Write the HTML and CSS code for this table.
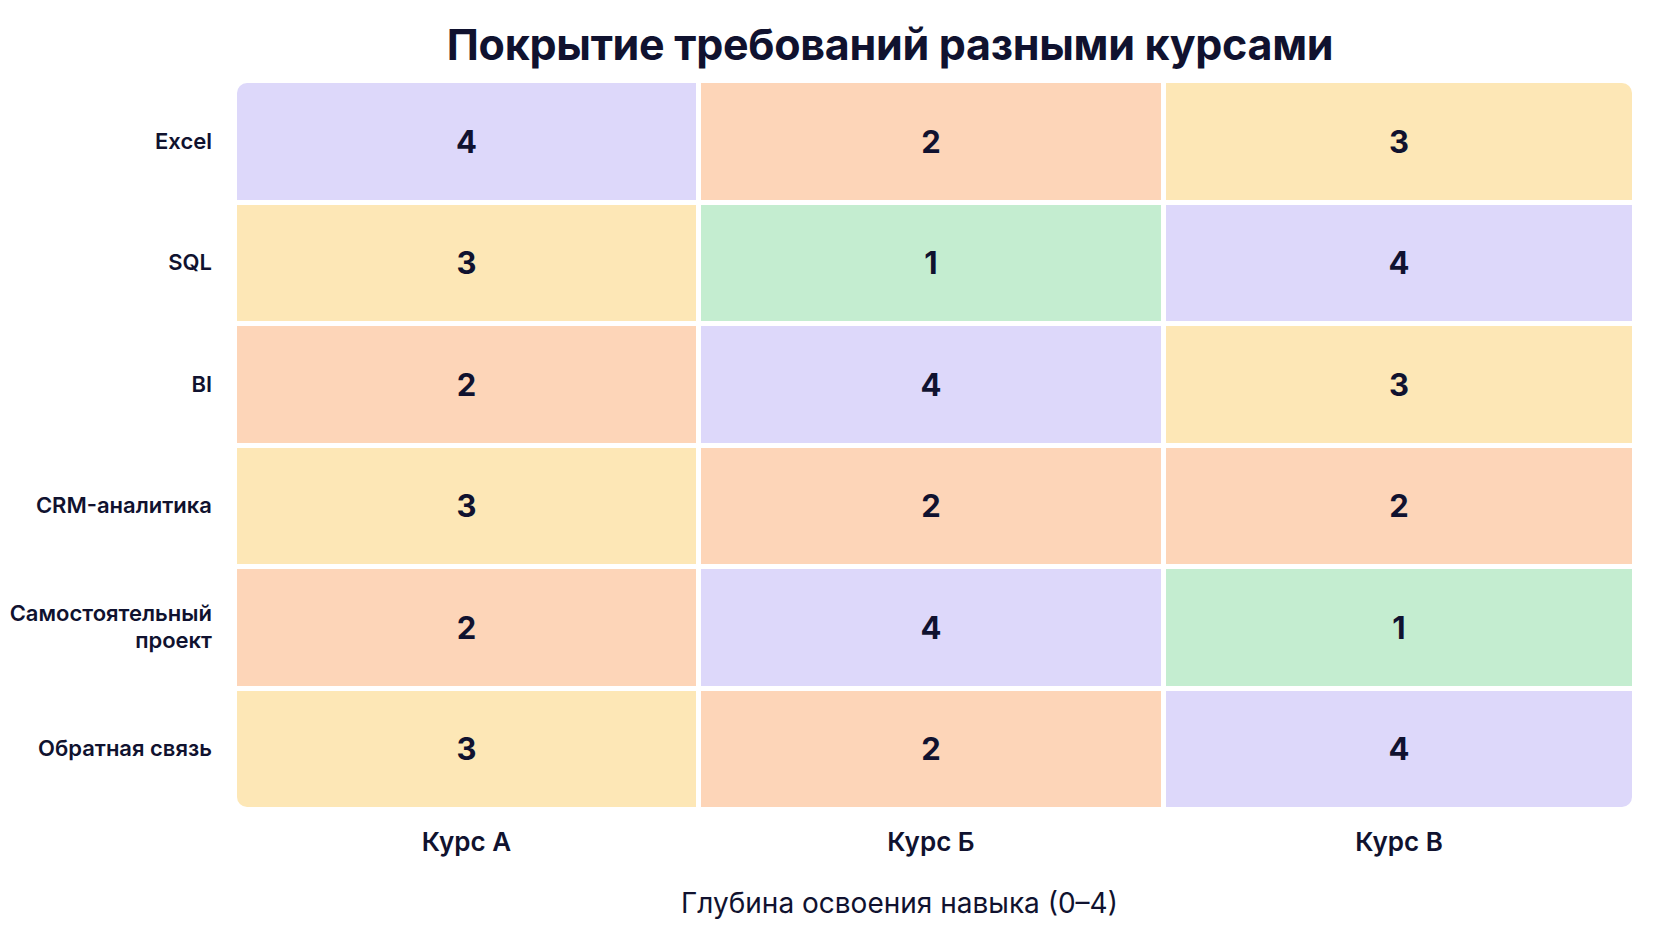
FILE: index.html
```html
<!DOCTYPE html>
<html lang="ru">
<head>
<meta charset="utf-8">
<title>Покрытие требований разными курсами</title>
<link rel="stylesheet" href="styles.css">
</head>
<body>
<main class="chart">
  <h1 class="title">Покрытие требований разными курсами</h1>
  <div class="grid">
    <div class="label">Excel</div>
    <div class="cell c4 tl">4</div>
    <div class="cell c2">2</div>
    <div class="cell c3 tr">3</div>

    <div class="label">SQL</div>
    <div class="cell c3">3</div>
    <div class="cell c1">1</div>
    <div class="cell c4">4</div>

    <div class="label">BI</div>
    <div class="cell c2">2</div>
    <div class="cell c4">4</div>
    <div class="cell c3">3</div>

    <div class="label">CRM-аналитика</div>
    <div class="cell c3">3</div>
    <div class="cell c2">2</div>
    <div class="cell c2">2</div>

    <div class="label">Самостоятельный<br>проект</div>
    <div class="cell c2">2</div>
    <div class="cell c4">4</div>
    <div class="cell c1">1</div>

    <div class="label">Обратная связь</div>
    <div class="cell c3 bl">3</div>
    <div class="cell c2">2</div>
    <div class="cell c4 br">4</div>

    <div class="corner"></div>
    <div class="col-label">Курс А</div>
    <div class="col-label">Курс Б</div>
    <div class="col-label">Курс В</div>
  </div>
  <p class="axis-title">Глубина освоения навыка (0–4)</p>
</main>
</body>
</html>
```
FILE: styles.css
```css
html, body {
  margin: 0;
  padding: 0;
  background: #ffffff;
}
body {
  font-family: Inter, "Noto Sans", "DejaVu Sans", sans-serif;
  color: #10122f;
  width: 1672px;
  height: 941px;
  overflow: hidden;
}
.chart {
  display: flex;
  flex-direction: column;
  width: 1632px;
  padding-top: 18px;
}
.title {
  margin: 0;
  padding-left: 148px;
  font-size: 43px;
  line-height: 52px;
  font-weight: 700;
  text-align: center;
  letter-spacing: -0.3px;
}
.grid {
  margin-top: 13px;
  display: grid;
  grid-template-columns: 232px 459fr 460fr 466fr;
  grid-template-rows: repeat(6, 116.5px) auto;
  gap: 5px;
}
.label {
  display: flex;
  align-items: center;
  justify-content: flex-end;
  text-align: right;
  padding-right: 20px;
  font-size: 22px;
  line-height: 27px;
  font-weight: 600;
}
.cell {
  display: flex;
  align-items: center;
  justify-content: center;
  font-size: 31px;
  font-weight: 700;
}
.c1 { background: #c4edd0; }
.c2 { background: #fdd5b8; }
.c3 { background: #fde7b6; }
.c4 { background: #ddd8fa; }
.tl { border-top-left-radius: 10px; }
.tr { border-top-right-radius: 10px; }
.bl { border-bottom-left-radius: 10px; }
.br { border-bottom-right-radius: 10px; }
.col-label {
  margin-top: 13px;
  text-align: center;
  font-size: 26px;
  line-height: 33px;
  font-weight: 600;
}
.axis-title {
  margin: 28px 0 0;
  padding-left: 237px;
  padding-right: 70px;
  text-align: center;
  font-size: 28px;
  line-height: 34px;
  font-weight: 400;
}
```
